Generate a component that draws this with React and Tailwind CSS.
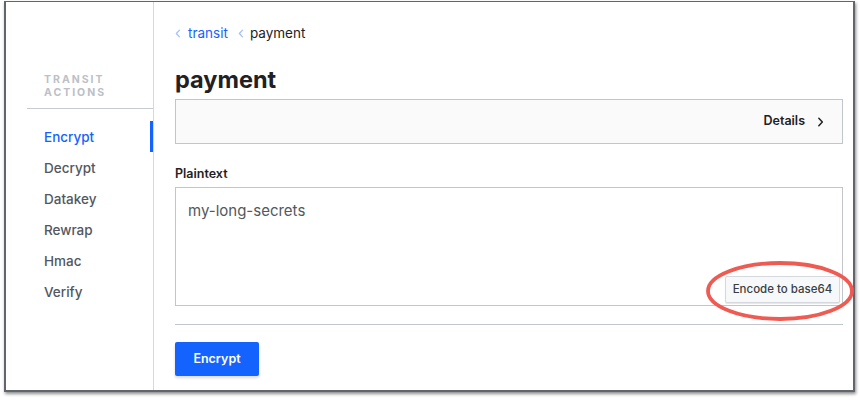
import React from 'react';

const navItems = ['Encrypt', 'Decrypt', 'Datakey', 'Rewrap', 'Hmac', 'Verify'];

function Chevron({ className }) {
  return (
    <svg viewBox="0 0 8 12" className={className} fill="none" stroke="currentColor" strokeWidth="1.8" strokeLinecap="round" strokeLinejoin="round">
      <path d="M6 1.5 1.8 6 6 10.5" />
    </svg>
  );
}

export default function App() {
  return (
    <div className="relative w-[860px] h-[400px] bg-white overflow-hidden" style={{ fontFamily: 'Inter, "Noto Sans", sans-serif' }}>
      <div className="ml-[4px] mt-[1px] w-[851px] h-[391px] border border-[#62666c] border-l-2 border-r-2 border-b-2 shadow-[1px_2px_3px_rgba(0,0,0,0.45)] flex bg-white">
        {/* sidebar */}
        <aside className="w-[148px] shrink-0 border-r border-[#d5d8dd] pt-[71px]">
          <div className="ml-[21px] border-b border-[#c7cbd1] pl-[17px] pb-[9px]">
            <div className="text-[10.5px] leading-[13px] font-bold tracking-[0.19em] text-[#bcc0c7]">TRANSIT</div>
            <div className="text-[10.5px] leading-[13px] font-bold tracking-[0.19em] text-[#bcc0c7]">ACTIONS</div>
          </div>
          <nav className="mt-[12px]">
            {navItems.map((item, i) => (
              <div key={item} className="relative h-[31px] flex items-center pl-[38px] pt-[2px] text-[13.5px]">
                <span className={i === 0 ? 'text-[#1563ff] font-medium' : 'text-[#525761] font-medium'}>{item}</span>
                {i === 0 && <span className="absolute right-0 top-0 h-[31px] w-[3px] bg-[#1563ff]" />}
              </div>
            ))}
          </nav>
        </aside>

        {/* main */}
        <main className="flex-1 pl-[21px] pr-[10px] pt-[21px]">
          <div className="flex items-center h-[20px] text-[13.5px]">
            <Chevron className="w-[6px] h-[11px] text-[#a7c1fb] mr-[7px]" />
            <span className="text-[#1563ff]">transit</span>
            <Chevron className="w-[6px] h-[11px] text-[#a7c1fb] ml-[10px] mr-[6px]" />
            <span className="text-[#1f2124]">payment</span>
          </div>
          <h1 className="mt-[21px] text-[23.5px] leading-[32px] font-bold text-[#1f2124]">payment</h1>
          <div className="mt-[3px] h-[45px] border border-[#c2c5cc] bg-[#fafafa] flex items-center justify-end pr-[18px]">
            <span className="text-[12.5px] font-semibold text-[#1f2124]">Details</span>
            <svg viewBox="0 0 8 12" className="w-[7px] h-[10px] ml-[12px] text-[#1f2124]" fill="none" stroke="currentColor" strokeWidth="1.8" strokeLinecap="round" strokeLinejoin="round">
              <path d="M2 1.5 6.2 6 2 10.5" />
            </svg>
          </div>
          <div className="mt-[22px] text-[12.5px] leading-[16px] font-semibold text-[#1f2124]">Plaintext</div>
          <div className="relative mt-[5px] h-[119px] border border-[#c2c5cc] bg-white pl-[12px] pt-[12px]">
            <div className="text-[15px] leading-[22px] text-[#525761]">my-long-secrets</div>
            <button className="absolute right-[2px] bottom-[2px] w-[115px] h-[27px] border border-[#d5d8dd] bg-[#f7f8fa] text-[11.5px] font-medium text-[#3a3d42] rounded-[2px] shadow-[0_1px_1px_rgba(0,0,0,0.1)]">
              Encode to base64
            </button>
          </div>
          <div className="mt-[18px] border-t border-[#c2c5cc]" />
          <button className="mt-[17px] w-[84px] h-[34px] bg-[#1563ff] text-white text-[12.5px] font-semibold rounded-[2px] shadow-[0_2px_3px_rgba(0,0,0,0.15)]">
            Encrypt
          </button>
        </main>
      </div>

      {/* annotation */}
      <svg className="absolute left-0 top-0 pointer-events-none" width="860" height="400">
        <ellipse cx="780" cy="291" rx="72" ry="28" fill="none" stroke="#ef5b52" strokeWidth="3.8" />
      </svg>
    </div>
  );
}
